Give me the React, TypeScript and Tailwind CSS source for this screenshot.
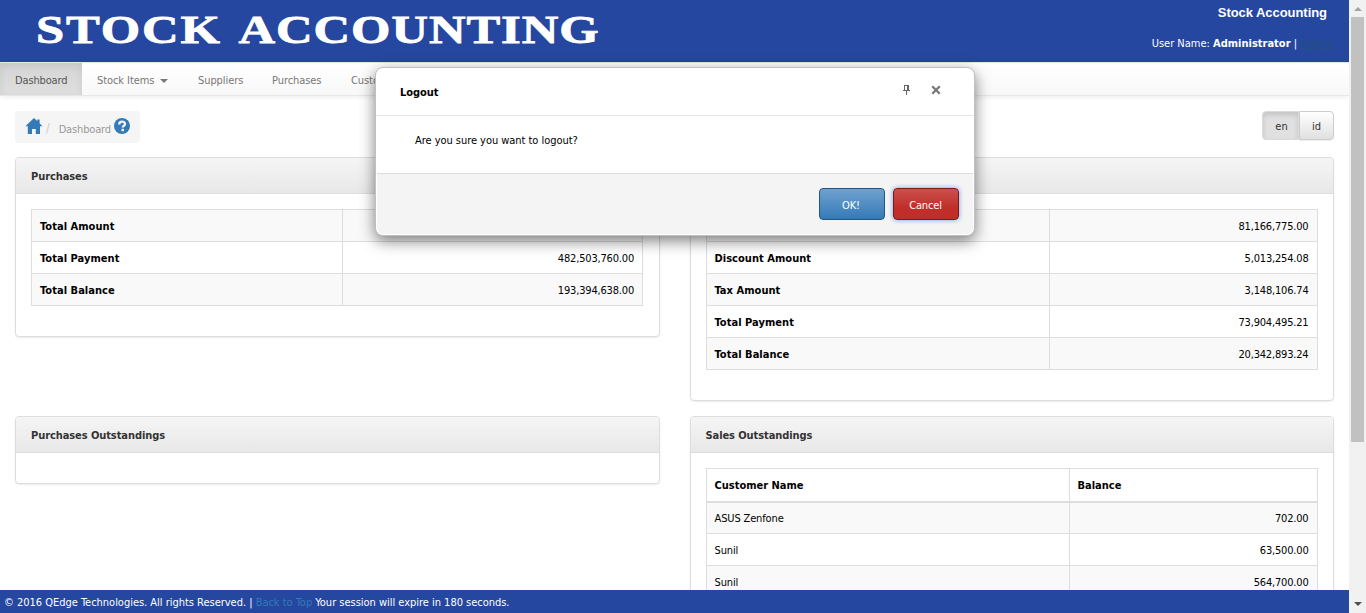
import React from "react";

function Panel({ title, className, children }: { title: string; className: string; children?: React.ReactNode }) {
  return (
    <section className={`rounded border border-[#ddd] bg-white shadow-[0_1px_2px_rgba(0,0,0,0.075)] ${className}`}>
      <h3 className="flex h-9 items-center rounded-t-[3px] border-b border-[#ddd] bg-linear-to-b from-[#f5f5f5] to-[#e8e8e8] px-[15px] pt-[2px] font-bold tracking-[-0.08px] text-[#333]">
        {title}
      </h3>
      <div className="pt-[15px] pr-[15.5px] pl-[15px]">{children}</div>
    </section>
  );
}

function Summary({ rows, first }: { rows: [string, string][]; first: string }) {
  return (
    <table className="w-full table-fixed border-collapse">
      <colgroup>
        <col className={first} />
        <col />
      </colgroup>
      <tbody>
        {rows.map(([label, value]) => (
          <tr key={label} className="h-8 odd:bg-[#f9f9f9]">
            <td className="border border-[#ddd] px-2 pt-[2px] font-bold tracking-[0.04px]">{label}</td>
            <td className="border border-[#ddd] px-2 pt-[2px] text-right tracking-[-0.18px]">{value}</td>
          </tr>
        ))}
      </tbody>
    </table>
  );
}

export default function App() {
  return (
    <div className="relative flex h-[613px] w-[1366px] overflow-hidden bg-white font-['DejaVu_Sans_Condensed','DejaVu_Sans',sans-serif] text-[11px] leading-[15px] text-black">
      <div className="flex w-[1349px] flex-col">
        <header className="flex h-[62px] shrink-0 justify-between bg-[#2547a0] text-white">
          <h1 className="ml-[36px] origin-left scale-x-[1.235] pt-[4px] font-['Liberation_Serif',serif] text-[41px] leading-[50px] font-bold tracking-[1.5px] whitespace-nowrap [-webkit-text-stroke:0.8px_white]">
            STOCK <span className="ml-[2px] tracking-[0.75px]">ACCOUNTING</span>
          </h1>
          <div className="flex w-[200px] flex-col items-end pr-[15px]">
            <div className="mt-[5px] pr-[7px] font-['Liberation_Sans',sans-serif] text-[13px] font-bold tracking-[-0.05px]">Stock Accounting</div>
            <div className="mt-[16px] whitespace-nowrap">
              User Name: <b>Administrator</b> | <a className="text-[#23527c] underline">Logout</a>
            </div>
          </div>
        </header>

        <nav className="flex h-[34px] shrink-0 border-y border-[#e7e7e7] bg-linear-to-b from-white to-[#f8f8f8] leading-[35px] tracking-[-0.08px] text-[#777] shadow-[0_1px_5px_rgba(0,0,0,0.075)]">
          <a className="w-[82px] bg-linear-to-b from-[#d5d5d5] to-[#dfdfdf] pl-[15px] tracking-[-0.15px] text-[#555] shadow-[inset_0_3px_9px_rgba(0,0,0,0.075)]">Dashboard</a>
          <a className="flex w-[101px] items-start pl-[15px]">
            Stock Items
            <span className="mt-[16px] ml-[6px] border-x-4 border-t-4 border-x-transparent border-t-[#777]" />
          </a>
          <a className="w-[74px] pl-[15px]">Suppliers</a>
          <a className="w-[79px] pl-[15px]">Purchases</a>
          <a className="pl-[15px]">Customers</a>
        </nav>

        <main className="flex min-h-0 flex-1 flex-col overflow-hidden px-[15px]">
          <div className="mt-[15px] flex justify-between">
            <div className="flex h-8 w-[125px] items-center rounded bg-[#f5f5f5] pl-[10px]">
              <svg width="18" height="18" viewBox="0 0 18 18" className="-mt-[2px] fill-[#337ab7]">
                <path d="M9 1 .4 9.2H2.8V17H7V12H10.8V17H15V9.2H17.4L14.6 6.3V2.6H12.2V4.1Z" />
              </svg>
              <span className="ml-[3px] pt-[3px] text-[12px] text-[#ccc]">/</span>
              <span className="ml-[9px] w-[55px] pt-[4px] tracking-[-0.15px] text-[#999]">Dashboard</span>
              <svg width="16" height="16" viewBox="0 0 16 16" className="-mt-[2px]">
                <circle cx="8" cy="8" r="8" fill="#337ab7" />
                <path d="M5.2 6.4C5.2 2.6 11 2.8 11 6 11 8 8.7 7.6 8.7 9.6" fill="none" stroke="#f5f5f5" strokeWidth="2.3" />
                <path d="M7.5 10.8H10V13.2H7.5Z" fill="#f5f5f5" />
              </svg>
            </div>
            <div className="flex h-[29px] text-[#333]">
              <button className="w-[37px] rounded-l border border-[#dbdbdb] bg-[#e0e0e0] pt-[2px] pl-[2px] shadow-[inset_0_3px_5px_rgba(0,0,0,0.125)]">en</button>
              <button className="w-[35px] rounded-r border border-[#ccc] bg-linear-to-b from-white to-[#e0e0e0] pt-[2px] shadow-[0_1px_1px_rgba(0,0,0,0.075)]">id</button>
            </div>
          </div>

          <div className="mt-[14px] flex gap-[30px]">
            <div className="w-[644.5px] shrink-0">
              <Panel title="Purchases" className="h-[180px]">
                <Summary
                  first="w-[311px]"
                  rows={[
                    ["Total Amount", "675,898,398.00"],
                    ["Total Payment", "482,503,760.00"],
                    ["Total Balance", "193,394,638.00"],
                  ]}
                />
              </Panel>
            </div>
            <div className="w-[644.5px] shrink-0">
              <Panel title="Sales" className="h-[244px]">
                <Summary
                  first="w-[343px]"
                  rows={[
                    ["Total Amount", "81,166,775.00"],
                    ["Discount Amount", "5,013,254.08"],
                    ["Tax Amount", "3,148,106.74"],
                    ["Total Payment", "73,904,495.21"],
                    ["Total Balance", "20,342,893.24"],
                  ]}
                />
              </Panel>
            </div>
          </div>

          <div className="mt-[15px] flex items-start gap-[30px]">
            <div className="w-[644.5px] shrink-0">
              <Panel title="Purchases Outstandings" className="h-[68px]" />
            </div>
            <div className="w-[644.5px] shrink-0">
              <Panel title="Sales Outstandings" className="h-[260px]">
                <table className="w-full table-fixed border-collapse">
                  <colgroup>
                    <col className="w-[363px]" />
                    <col />
                  </colgroup>
                  <thead>
                    <tr className="h-[33px] text-left">
                      <th className="border border-b-2 border-[#ddd] px-2 pt-px">Customer Name</th>
                      <th className="border border-b-2 border-[#ddd] px-2 pt-px">Balance</th>
                    </tr>
                  </thead>
                  <tbody>
                    {[
                      ["ASUS Zenfone", "702.00"],
                      ["Sunil", "63,500.00"],
                      ["Sunil", "564,700.00"],
                    ].map(([name, value]) => (
                      <tr key={value} className="h-8 odd:bg-[#f9f9f9]">
                        <td className="border border-[#ddd] px-2 pt-[2px] tracking-[-0.14px]">{name}</td>
                        <td className="border border-[#ddd] px-2 pt-[2px] text-right tracking-[-0.18px]">{value}</td>
                      </tr>
                    ))}
                  </tbody>
                </table>
              </Panel>
            </div>
          </div>
        </main>

        <footer className="h-[23px] shrink-0 bg-[#2547a0] pl-1 leading-[25px] tracking-[-0.02px] whitespace-pre text-white">
          © 2016 QEdge Technologies. All rights Reserved. | <a className="text-[#337ab7]">Back to Top</a> Your session will expire in 180 seconds.
        </footer>
      </div>

      <div className="flex w-[17px] flex-col items-center justify-between bg-[#f1f1f1]">
        <div className="flex h-[17px] items-center">
          <span className="border-x-[4px] border-b-[4px] border-x-transparent border-b-[#a3a3a3]" />
        </div>
        <div className="h-[425px] w-[13px] bg-[#c1c1c1]" />
        <div className="flex flex-1 items-end pb-[7px]">
          <span className="border-x-[4px] border-t-[4px] border-x-transparent border-t-[#505050]" />
        </div>
      </div>

      <div className="absolute top-[67px] left-[375px] flex h-[169px] w-[600px] flex-col rounded-lg border border-[#c0c0c0] bg-white shadow-[0_5px_15px_rgba(0,0,0,0.5)]">
        <div className="flex h-12 items-center border-b border-[#e5e5e5] pl-[24px]">
          <span className="flex-1 pt-[2px] font-bold tracking-[-0.08px]">Logout</span>
          <svg width="9" height="12" viewBox="0 0 9 12" className="-mt-1 mr-[20px]" fill="#666" shapeRendering="crispEdges">
            <path d="M2 1H7V6H8V7H5V11H4V7H1V6H2ZM3 2V6H5V2Z" fillRule="evenodd" />
          </svg>
          <svg width="10" height="10" viewBox="0 0 10 10" className="-mt-1 mr-[33px]">
            <path d="M1.2 1.2 8.8 8.8M8.8 1.2 1.2 8.8" stroke="#777" strokeWidth="2.2" />
          </svg>
        </div>
        <div className="flex-1 pt-[17px] pl-[39px] tracking-[-0.04px]">Are you sure you want to logout?</div>
        <div className="mx-px mb-px flex h-[61px] justify-end gap-2 rounded-b-md border-t border-[#ddd] bg-[#f4f4f4] pt-[14px] pr-[14px] text-white">
          <button className="h-8 w-[66px] rounded border border-[#245580] bg-linear-to-b from-[#6fa2cf] to-[#337ab7] pt-[2px] pr-[2px] tracking-[-0.1px]">OK!</button>
          <button className="h-8 w-[66px] rounded border border-[#7d1a18] bg-linear-to-b from-[#ca504c] to-[#c12e2a] to-60% pt-[2px] pr-px tracking-[-0.15px] shadow-[0_0_5px_#6a9ef0]">Cancel</button>
        </div>
      </div>
    </div>
  );
}
